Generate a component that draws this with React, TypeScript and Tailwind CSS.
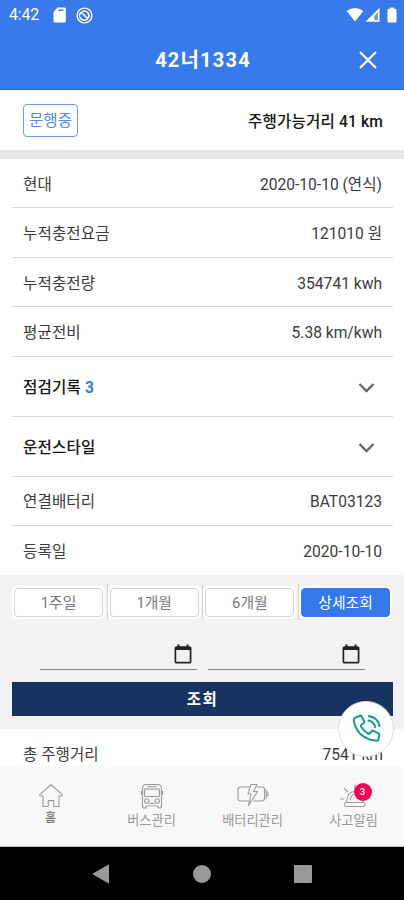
import type { ReactNode } from "react";
import clsx from "clsx";

type InfoItem = {
  label: string;
  value: string;
};

type NavItem = {
  label: string;
  icon: ReactNode;
  badge?: number;
};

const summary: InfoItem[] = [
  { label: "현대", value: "2020-10-10 (연식)" },
  { label: "누적충전요금", value: "121010 원" },
  { label: "누적충전량", value: "354741 kwh" },
  { label: "평균전비", value: "5.38 km/kwh" },
];

const details: InfoItem[] = [
  { label: "연결배터리", value: "BAT03123" },
  { label: "등록일", value: "2020-10-10" },
];

const periods = ["1주일", "1개월", "6개월", "상세조회"];

const HomeIcon = () => (
  <svg width="26" height="26" viewBox="0 0 26 26" fill="none" stroke="#9a9a9a" strokeWidth="1.1" strokeLinejoin="round">
    <path d="M13 1.5 1.8 11.7c-.5.6 0 1.3.8 1.3H5v10.5h5.3V17.6h5.4v5.9H21V13h2.4c.8 0 1.3-.7.8-1.3z" />
  </svg>
);

const BusIcon = () => (
  <svg width="26" height="26" viewBox="0 0 26 26" fill="none" stroke="#9a9a9a" strokeWidth="1.1" strokeLinejoin="round">
    <path d="M3.500 23V5.500Q3.500 1.500 7.500 1.500H18.500Q22.500 1.500 22.500 5.500V23Q22.500 25 20.500 25T18.500 23H7.500Q7.500 25 5.500 25T3.500 23Z" />
    <path d="M8.500 3.800h9M2.500 8v4M23.500 8v4" />
    <rect x="5.500" y="6" width="15" height="7.500" rx=".8" />
    <circle cx="7.800" cy="18" r="2.200" />
    <circle cx="18.200" cy="18" r="2.200" />
    <path d="M10 20.500h6" />
  </svg>
);

const BatteryIcon = () => (
  <svg width="34" height="26" viewBox="0 0 34 26" fill="none" stroke="#9a9a9a" strokeWidth="1.1" strokeLinejoin="round">
    <path d="M14 4H4.500Q2 4 2 6.500v9Q2 18 4.500 18H13M20.500 4H26Q28.500 4 28.500 6.500v9Q28.500 18 26 18h-8.500" />
    <path d="M28.500 6.500c1.300 0 1.800.5 1.800 1.500v6c0 1-.5 1.500-1.800 1.500M30.300 8.800c1 0 1.700.5 1.700 1.200v2c0 .7-.7 1.200-1.700 1.200" />
    <path d="m15 1.500-3 9.500H15l-2.500 11.500 9-14h-4l3.500-7z" />
  </svg>
);

const SirenIcon = () => (
  <svg width="28" height="26" viewBox="0 0 28 26" fill="none" stroke="#9a9a9a" strokeWidth="1.1" strokeLinecap="round">
    <rect x="4.500" y="19.500" width="20.500" height="4" rx="1.800" />
    <path d="M6.500 19.500C7 11.500 10.500 8.500 14.700 8.500S22.500 11.500 23 19.500M15 5.500V2M4.500 5.500l3 3M.8 16h3M10.500 16.500q.3-4 3-5" />
  </svg>
);

const CallIcon = () => (
  <svg width="29" height="29" viewBox="0 0 30 30" fill="none" stroke="#159b89" strokeWidth="2.100" strokeLinecap="round" strokeLinejoin="round">
    <path d="M4.200 3.300 8.200 1.800Q9.500 1.400 10.200 2.700l2.300 4.700q.6 1.300-.5 2.200L9.600 11.400q-.7.600-.2 1.500 2.600 4.900 7.300 7.500.9.500 1.500-.2l2-2.300q.9-1 2.100-.4l5 2.500q1.200.6.900 1.900l-.9 4.200Q27 27.700 25.500 27.700 14.600 26.700 8.200 20.100 2.300 13.900 1.900 5.300 1.900 4.100 4.200 3.300Z" />
    <path d="M17.500 2.200Q27 3.500 28.300 12.500M17 6.800q6 1.200 7 6.700" />
  </svg>
);

const navItems: NavItem[] = [
  { label: "홈", icon: <HomeIcon /> },
  { label: "버스관리", icon: <BusIcon /> },
  { label: "배터리관리", icon: <BatteryIcon /> },
  { label: "사고알림", icon: <SirenIcon />, badge: 3 },
];

const StatusBar = () => (
  <div className="flex h-[30px] items-center justify-between pl-[9px] pr-[7px] text-white">
    <div className="flex items-center">
      <span className="w-[31px] text-[16px] leading-none tracking-[-0.2px]">4:42</span>
      <svg className="ml-[13px]" width="13" height="16" viewBox="0 0 13 16">
        <path fill="#fff" fillRule="evenodd" d="M4.500.5h7Q12.800.5 12.800 2v12q0 1.500-1.500 1.500H2Q.5 15.500.5 14V5zM5.500 2.600v1.500h5V2.600z" />
      </svg>
      <svg className="ml-[10px]" width="17" height="17" viewBox="0 0 17 17" fill="none" stroke="#fff">
        <circle cx="8.500" cy="8.500" r="7.400" strokeWidth="1.400" />
        <path strokeWidth="1.500" d="M5 5.200a4.700 4.700 0 0 0 6.800 6.600M12.300 11a4.700 4.700 0 0 0-6.200-6.500M5 5l7 7" />
      </svg>
    </div>
    <div className="flex items-center">
      <svg width="18" height="16" viewBox="0 0 18 16">
        <path fill="#fff" d="M.7 4Q9-2 17.300 4L9 14.500z" />
      </svg>
      <svg className="ml-px" width="15" height="16" viewBox="0 0 15 16">
        <path fill="#fff" fillRule="evenodd" d="M14.500.8v14H.5zM13 5 9.300 9.300V13.300H13z" />
        <path fill="#fff" opacity=".25" d="M13 5 9.300 9.300v4H13z" />
      </svg>
      <svg className="ml-[7px]" width="10" height="16" viewBox="0 0 10 16">
        <path fill="#fff" d="M3 .5h4v1.300h1.300Q9.500 1.800 9.500 3v11.300q0 1.200-1.200 1.200H1.700Q.5 15.500.5 14.300V3q0-1.200 1.200-1.200H3z" />
      </svg>
    </div>
  </div>
);

const InfoRow = ({ label, value }: InfoItem) => (
  <div className="flex h-[49.4px] items-center justify-between border-b border-[#d9d9d9] px-[11px] pt-[5px] last:border-b-0">
    <span className="tracking-[0.100px]">{label}</span>
    <span>{value}</span>
  </div>
);

const ExpandRow = ({ label, count }: { label: string; count?: number }) => (
  <button className="flex h-[60px] w-full items-center justify-between border-b border-[#d9d9d9] pl-[11px] pr-[18px] pt-[3px] font-medium text-[#151515]">
    <span className="pt-[3px] tracking-[0.150px]">
      {label}
      {count && <span className="ml-1 font-bold text-[#3779e8]">{count}</span>}
    </span>
    <svg width="17" height="12" viewBox="0 0 17 12" fill="none" stroke="#666" strokeWidth="2.300">
      <path d="m1.500 2 7 7 7-7" />
    </svg>
  </button>
);

const DateField = () => (
  <div className="flex h-[32px] w-[157px] items-start justify-end border-b border-[#858585] pr-[5px] pt-[6px]">
    <svg width="18" height="20" viewBox="0 0 18 20" fill="none">
      <rect x="1.400" y="3" width="15.200" height="15.700" rx="1" stroke="#222" strokeWidth="1.700" />
      <path fill="#222" d="M1 3h16v3H1zM3.500.5h2V3h-2zM12.500.5h2V3h-2z" />
    </svg>
  </div>
);

const SearchPanel = () => (
  <section className="h-[154px] bg-[#f2f2f2] pl-3 pr-[11px] pt-[9px]">
    <div className="flex h-[36px]">
      {periods.map((period, index) => (
        <div
          key={period}
          className={clsx(
            "flex w-[95.700px] shrink-0 items-center",
            index < 3 && "border-r border-[#d4d4d4]"
          )}
        >
          <div className="flex h-[33px] w-[93px] rounded-[5px] bg-white p-[2px]">
            <button
              className={clsx(
                "flex-1 rounded-[4px] border pt-[3px] text-[14.800px]",
                index === 3
                  ? "border-[#3478ea] bg-[#3478ea] text-white"
                  : "border-[#d2d4d6] bg-white text-[#727980]"
              )}
            >
              {period}
            </button>
          </div>
        </div>
      ))}
    </div>
    <div className="mt-[18px] flex gap-[11px] pl-[28px]">
      <DateField />
      <DateField />
    </div>
    <button className="mt-[12px] flex h-[34px] w-full items-center justify-center bg-[#173362] pt-[4px] text-[15.500px] font-bold tracking-[1.500px] text-white">
      조회
    </button>
  </section>
);

const BottomNav = () => (
  <nav className="flex h-[81px] border-b border-[#b5b5b5] bg-[#f8f8f8]">
    {navItems.map(({ label, icon, badge }, index) => (
      <div key={label} className="flex flex-1 flex-col items-center pt-[17px] text-[#999]">
        <div className="relative">
          {icon}
          {badge && (
            <span className="absolute -right-[4px] top-0 flex size-[18px] items-center justify-center rounded-full bg-[#f50057] text-[9px] font-medium text-white">
              {badge}
            </span>
          )}
        </div>
        <span
          className={clsx(
            "leading-[18px]",
            index === 0 ? "text-[12px] font-bold text-[#858585]" : "mt-[3px] text-[13.200px]"
          )}
        >
          {label}
        </span>
      </div>
    ))}
  </nav>
);

const SystemNav = () => (
  <div className="flex h-[53px] items-center justify-center gap-[83px] bg-black">
    <svg width="18" height="20" viewBox="0 0 18 20">
      <path fill="#999" stroke="#999" strokeLinejoin="round" d="M1 10 16.500 1v18z" />
    </svg>
    <span className="size-[18px] rounded-full bg-[#999]" />
    <span className="size-[18px] rounded-[1px] bg-[#999]" />
  </div>
);

export default function App() {
  return (
    <div className="relative h-[900px] w-[404px] overflow-hidden bg-white font-['Roboto','Noto_Sans_CJK_KR',sans-serif] text-[15.600px] leading-none text-[#3b3b3b]">
      <header className="h-[90px] border-b border-[#2469df] bg-[#387ae9]">
        <StatusBar />
        <div className="flex h-[59px] items-center pl-[48px] pr-[27px] text-white">
          <h1 className="flex-1 pr-px text-center text-[20px] font-bold tracking-[1.200px]">42너1334</h1>
          <button aria-label="닫기">
            <svg width="18" height="18" viewBox="0 0 18 18" fill="none" stroke="#fff" strokeWidth="2.200">
              <path d="m1 1 16 16M17 1 1 17" />
            </svg>
          </button>
        </div>
      </header>

      <div className="flex h-[60px] items-center justify-between pl-[23px] pr-[21px]">
        <span className="flex h-[33px] w-[55px] items-center justify-center rounded-[4px] border border-[#6b9aee] pt-[3px] text-[#5389e9]">
          문행중
        </span>
        <span className="pt-[5px] font-medium tracking-[0.150px] text-[#151515]">주행가능거리 41 km</span>
      </div>
      <div className="h-[9px] bg-[#e7e8e9]" />

      <main className="ml-3 mr-[11px] h-[416px] overflow-hidden">
        {summary.map((item) => (
          <InfoRow key={item.label} {...item} />
        ))}
        <ExpandRow label="점검기록" count={3} />
        <ExpandRow label="운전스타일" />
        {details.map((item) => (
          <InfoRow key={item.label} {...item} />
        ))}
      </main>

      <SearchPanel />

      <div className="flex h-[37px] items-center justify-between overflow-hidden pl-[23px] pr-[21px] pt-[16px]">
        <span>총 주행거리</span>
        <span>7541 km</span>
      </div>

      <BottomNav />
      <SystemNav />

      <button
        aria-label="전화"
        className="absolute left-[338px] top-[701px] flex size-[56px] items-center justify-center rounded-full border border-[#ddd] bg-white pb-[2px]"
      >
        <CallIcon />
      </button>
    </div>
  );
}
